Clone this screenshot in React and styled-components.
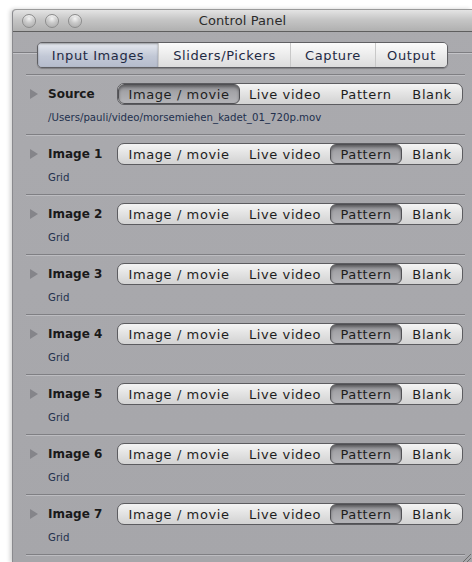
import React from "react";
import styled, { createGlobalStyle } from "styled-components";

const GlobalStyle = createGlobalStyle`
  html, body {
    margin: 0;
    padding: 0;
    background: #ffffff;
  }
  body {
    font-family: "DejaVu Sans", "Liberation Sans", sans-serif;
  }
`;

const SOURCES = ["Image / movie", "Live video", "Pattern", "Blank"];
const SOURCE_WIDTHS = [122, 90, 72, 60];

const TABS = ["Input Images", "Sliders/Pickers", "Capture", "Output"];
const TAB_WIDTHS = [120, 132, 85, 72];

const inputs = [
  { name: "Source", mode: 0, detail: "/Users/pauli/video/morsemiehen_kadet_01_720p.mov" },
  { name: "Image 1", mode: 2, detail: "Grid" },
  { name: "Image 2", mode: 2, detail: "Grid" },
  { name: "Image 3", mode: 2, detail: "Grid" },
  { name: "Image 4", mode: 2, detail: "Grid" },
  { name: "Image 5", mode: 2, detail: "Grid" },
  { name: "Image 6", mode: 2, detail: "Grid" },
  { name: "Image 7", mode: 2, detail: "Grid" },
];

const App = () => {
  return (
    <>
      <GlobalStyle />
      <Page>
        <Window>
          <TitleBar>
            <Lights>
              <Light />
              <Light />
              <Light />
            </Lights>
            <Title>Control Panel</Title>
          </TitleBar>
          <Body>
            <TabStrip>
              <TabRule />
              <Tabs>
                {TABS.map((t, i) => (
                  <Tab key={t} $w={TAB_WIDTHS[i]} $active={i === 0} $first={i === 0}>
                    {t}
                  </Tab>
                ))}
              </Tabs>
              <TabRule />
            </TabStrip>
            <Divider />
            {inputs.map((row) => (
              <Section key={row.name}>
                <Header>
                  <Disclosure />
                  <Label>{row.name}</Label>
                  <Segmented>
                    {SOURCES.map((s, i) => (
                      <Segment key={s} $w={SOURCE_WIDTHS[i]} $on={i === row.mode}>
                        {s}
                      </Segment>
                    ))}
                  </Segmented>
                </Header>
                <Detail>{row.detail}</Detail>
                <Divider />
              </Section>
            ))}
          </Body>
          <Grip viewBox="0 0 12 12">
            <line x1="11" y1="3" x2="3" y2="11" stroke="#6c6c6c" />
            <line x1="11" y1="7" x2="7" y2="11" stroke="#6c6c6c" />
          </Grip>
        </Window>
      </Page>
    </>
  );
};

const Page = styled.div`
  width: 472px;
  height: 562px;
  padding: 9px 0 0 12px;
  box-sizing: border-box;
  overflow: hidden;
`;

const Window = styled.div`
  position: relative;
  height: 100%;
  display: flex;
  flex-direction: column;
  background: linear-gradient(180deg, #aaaaae 0%, #a6a6aa 100%);
  border-left: 1px solid #8a8a8e;
  border-top: 1px solid #9a9a9a;
  border-radius: 4px 0 0 0;
  box-shadow: -2px 0 4px rgba(0, 0, 0, 0.18);
`;

const TitleBar = styled.div`
  position: relative;
  height: 21px;
  display: flex;
  align-items: center;
  background: linear-gradient(180deg, #e4e4e4 0%, #c6c6c6 45%, #b0b0b0 100%);
  border-bottom: 1px solid #5e5e5e;
  border-radius: 4px 0 0 0;
`;

const Lights = styled.div`
  display: flex;
  gap: 9px;
  padding-left: 9px;
`;

const Light = styled.div`
  width: 14px;
  height: 14px;
  border-radius: 50%;
  box-sizing: border-box;
  border: 1px solid #8c8c8c;
  background: radial-gradient(circle at 50% 30%, #f4f4f4 0%, #c8c8c8 45%, #a6a6a6 100%);
  box-shadow: inset 0 1px 1px rgba(255, 255, 255, 0.7);
`;

const Title = styled.div`
  position: absolute;
  left: 0;
  right: 0;
  text-align: center;
  font-size: 13px;
  letter-spacing: 0.1px;
  color: #2b2b2b;
`;

const Body = styled.div`
  flex: 1;
  display: flex;
  flex-direction: column;
  padding-top: 11px;
`;

const TabStrip = styled.div`
  display: flex;
  align-items: center;
  height: 24px;
  margin-bottom: 7px;
`;

const TabRule = styled.div`
  flex: 1;
  height: 0;
  border-top: 1px solid #7e7e82;
  border-bottom: 1px solid #c4c4c8;
  margin-top: -4px;
`;

const Tabs = styled.div`
  display: flex;
  height: 24px;
  border: 1px solid #5f5f63;
  border-radius: 5px;
  overflow: hidden;
  box-shadow: 0 1px 1px rgba(0, 0, 0, 0.25);
`;

const Tab = styled.div`
  width: ${(p) => p.$w}px;
  box-sizing: border-box;
  display: flex;
  align-items: center;
  justify-content: center;
  font-size: 13px;
  letter-spacing: 0.6px;
  color: #1f2a44;
  border-left: ${(p) => (p.$first ? "none" : "1px solid #c8c8c8")};
  background: ${(p) =>
    p.$active
      ? "linear-gradient(180deg, #e6e9f0 0%, #c2c8d6 55%, #b5bccc 100%)"
      : "linear-gradient(180deg, #fbfbfb 0%, #ececec 50%, #dcdcdc 100%)"};
  box-shadow: ${(p) => (p.$active ? "inset 0 1px 2px rgba(0,0,0,0.35)" : "none")};
`;

const Divider = styled.div`
  height: 0;
  margin: 0 7px 0 13px;
  border-top: 1px solid #7f7f83;
  border-bottom: 1px solid #bdbdc1;
`;

const Section = styled.div`
  display: flex;
  flex-direction: column;
`;

const Header = styled.div`
  display: flex;
  align-items: center;
  height: 22px;
  margin-top: 7px;
  padding-left: 17px;
`;

const Disclosure = styled.div`
  width: 0;
  height: 0;
  border-top: 5px solid transparent;
  border-bottom: 5px solid transparent;
  border-left: 8px solid #85858a;
  margin-right: 10px;
`;

const Label = styled.div`
  width: 69px;
  font-size: 12px;
  font-weight: bold;
  color: #1a1a1a;
`;

const Segmented = styled.div`
  display: flex;
  height: 22px;
  box-sizing: border-box;
  border: 1px solid #5c5c60;
  border-radius: 7px;
  overflow: hidden;
  background: linear-gradient(180deg, #f4f4f4 0%, #e2e2e2 50%, #d2d2d2 100%);
`;

const Segment = styled.div`
  width: ${(p) => p.$w}px;
  box-sizing: border-box;
  display: flex;
  align-items: center;
  justify-content: center;
  font-size: 13px;
  letter-spacing: 0.6px;
  color: #1e1e1e;
  border-radius: ${(p) => (p.$on ? "6px" : "0")};
  border: ${(p) => (p.$on ? "1px solid #505054" : "none")};
  background: ${(p) =>
    p.$on ? "linear-gradient(180deg, #8e8e92 0%, #a4a4a8 40%, #b4b4b8 100%)" : "transparent"};
  box-shadow: ${(p) => (p.$on ? "inset 0 2px 3px rgba(0,0,0,0.35)" : "none")};
`;

const Detail = styled.div`
  height: 24px;
  display: flex;
  align-items: center;
  padding-left: 35px;
  margin-bottom: 5px;
  font-size: 10.2px;
  color: #22304d;
`;

const Grip = styled.svg`
  position: absolute;
  right: 0;
  bottom: 0;
  width: 12px;
  height: 12px;
`;

export default App;
